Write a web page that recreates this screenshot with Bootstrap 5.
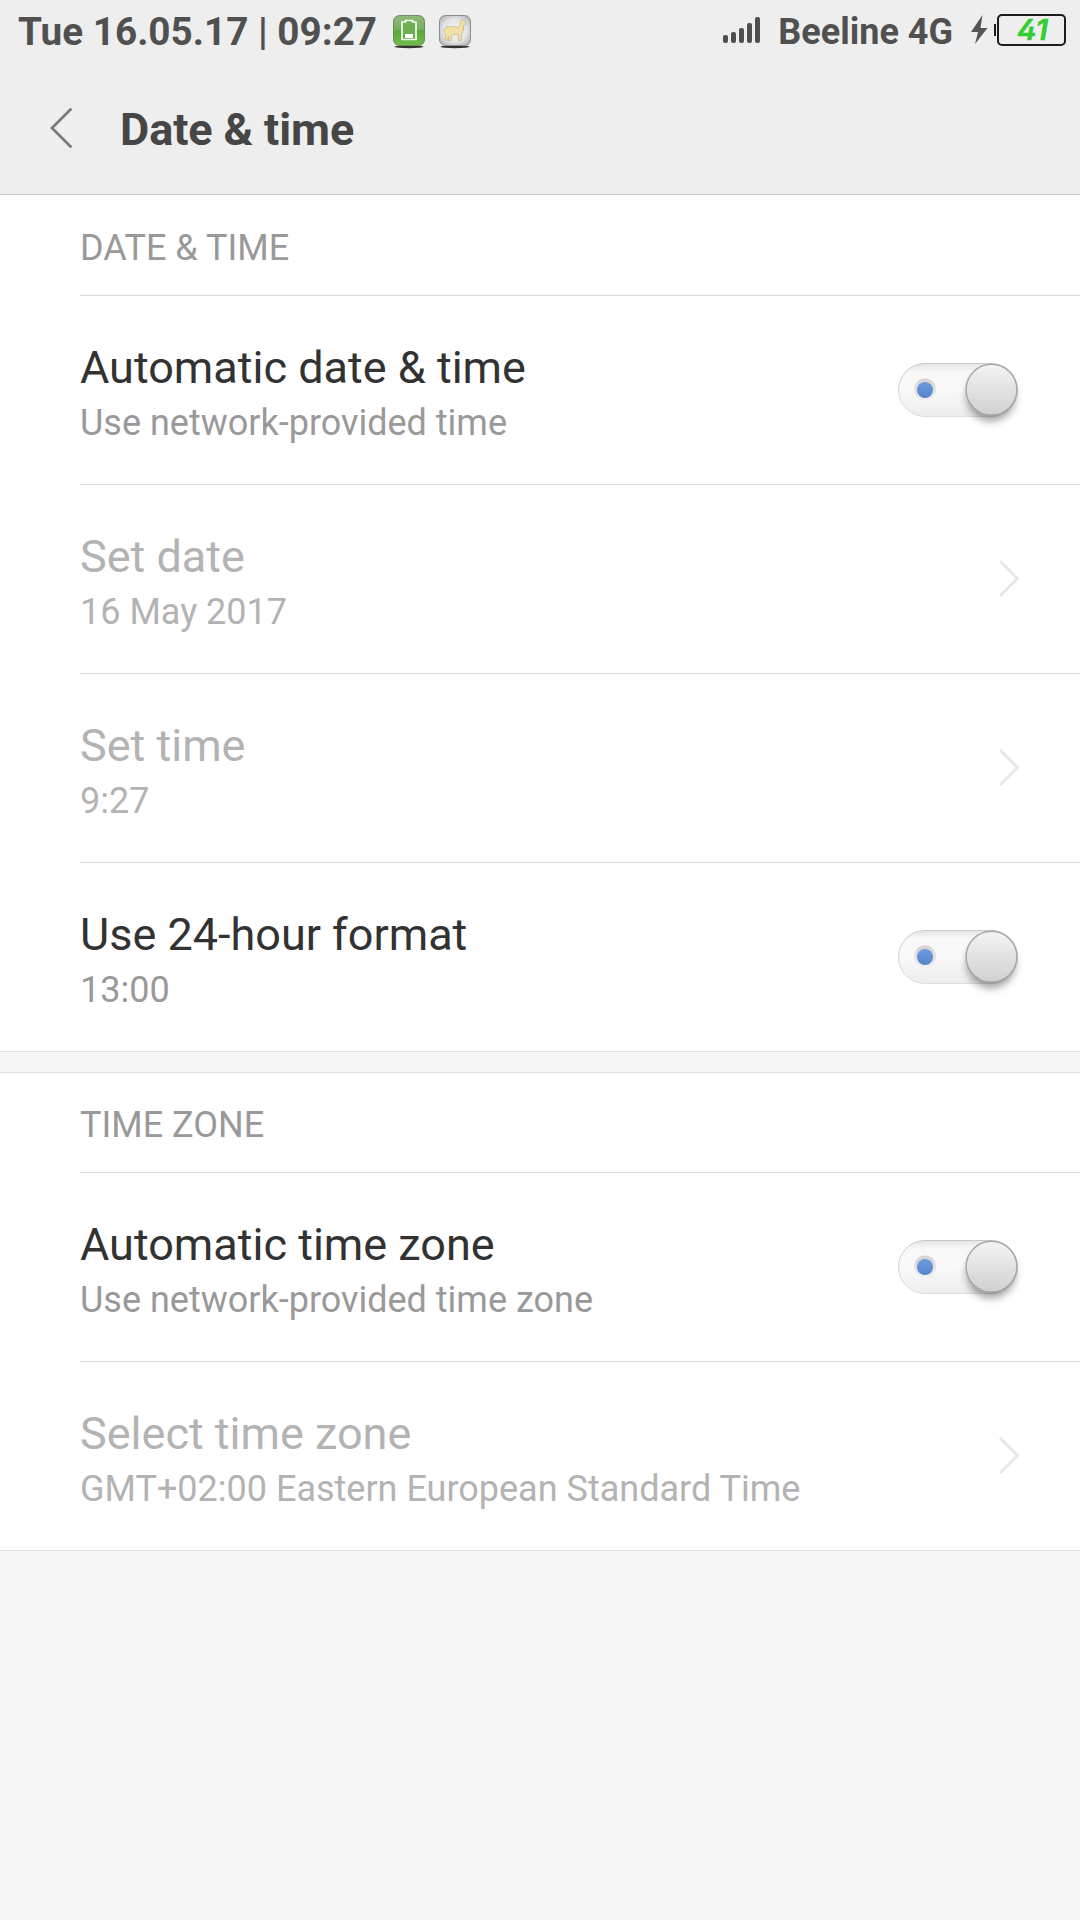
<!DOCTYPE html>
<html lang="en">
<head>
<meta charset="utf-8">
<meta name="viewport" content="width=device-width, initial-scale=1">
<title>Date &amp; time</title>
<link href="https://cdn.jsdelivr.net/npm/bootstrap@5.3.0/dist/css/bootstrap.min.css" rel="stylesheet">
<style>
body{font-family:Roboto,sans-serif;background:#f7f7f7;min-height:1920px;overflow-x:hidden}
.top-area{background:#eee;height:195px;border-bottom:1px solid #c8c8c8}
.status-bar{height:64px;padding:0 14px 0 18px;color:#505050;font-size:36px;font-weight:700;line-height:64px}
.status-clock{font-size:38.7px}
.status-app{margin-left:12px}
.status-clock + .status-app{margin-left:15px}
.status-signal{margin-bottom:2px}
.status-battery{margin-bottom:4px}
.status-carrier{margin:0 17px 0 17px}
.title-bar{height:130px;padding-left:50px}
.title-bar h1{font-size:45px;font-weight:700;line-height:54px;color:#464646;margin:2px 0 0 48px;letter-spacing:-.1px}
.title-bar svg{margin-bottom:2px}
.pref-group{background:#fff;border-bottom:1px solid #e0e0e0;padding-left:80px}
.pref-group + .pref-group{margin-top:20px;border-top:1px solid #e0e0e0}
.pref-head{height:100px;font-size:36px;font-weight:400;line-height:106px;color:#999;margin:0}
.pref-group + .pref-group .pref-head{height:99px;line-height:104px}
.pref-row{height:189px;border-top:1px solid #d8d8d8;padding:45px 59px 0 0}
.pref-name{font-size:45px;line-height:54px;color:#323232}
.pref-note{font-size:36px;line-height:56px;color:#999}
.pref-off .pref-name,.pref-off .pref-note{color:#b3b3b3}
.pref-row svg{flex:none}
.pref-toggle{margin:9px -3px 0 0}
.pref-arrow{margin-top:28px}
</style>
</head>
<body>
<svg width="0" height="0" class="position-absolute" aria-hidden="true">
  <defs>
    <linearGradient id="track" x1="0" y1="0" x2="0" y2="1"><stop offset="0" stop-color="#e4e4e4"/><stop offset=".16" stop-color="#f8f8f8"/><stop offset=".5" stop-color="#f9f9f9"/><stop offset="1" stop-color="#ededed"/></linearGradient>
    <linearGradient id="trackEdge" x1="0" y1="0" x2="0" y2="1"><stop offset="0" stop-color="#c8c8c8"/><stop offset="1" stop-color="#dedede"/></linearGradient>
    <linearGradient id="knob" x1="0" y1="0" x2="0" y2="1"><stop offset="0" stop-color="#f4f4f4"/><stop offset="1" stop-color="#d0d0d0"/></linearGradient>
    <linearGradient id="dot" x1="0" y1="0" x2="0" y2="1"><stop offset="0" stop-color="#6e9bdc"/><stop offset="1" stop-color="#5584cb"/></linearGradient>
    <linearGradient id="ring" x1="0" y1="0" x2="0" y2="1"><stop offset="0" stop-color="#d2d2d2"/><stop offset="1" stop-color="#f0f0f0"/></linearGradient>
    <linearGradient id="green" x1="0" y1="0" x2="0" y2="1"><stop offset="0" stop-color="#91b97c"/><stop offset=".48" stop-color="#77ad5c"/><stop offset=".5" stop-color="#5ea53c"/><stop offset="1" stop-color="#6fbd4b"/></linearGradient>
    <radialGradient id="silver" r=".7"><stop offset="0" stop-color="#f8f8f8"/><stop offset=".55" stop-color="#e4e4e4"/><stop offset="1" stop-color="#a4a4a4"/></radialGradient>
    <filter id="soft" x="-50%" y="-50%" width="200%" height="200%"><feGaussianBlur stdDeviation="4"/></filter>
    <symbol id="toggle" viewBox="0 0 134 84">
      <rect x="8.500" y="13.500" width="119" height="53" rx="26.500" fill="url(#track)" stroke="url(#trackEdge)"/>
      <circle cx="35" cy="39.500" r="11" fill="url(#ring)"/>
      <circle cx="35" cy="40" r="8" fill="url(#dot)"/>
      <circle cx="101" cy="47" r="24" fill="#000" opacity=".38" filter="url(#soft)"/>
      <circle cx="101.500" cy="39.700" r="25.400" fill="url(#knob)" stroke="#a8a8a8" stroke-width="1.500"/>
    </symbol>
    <symbol id="chevron" viewBox="0 0 24 40"><path d="M3 3 20.500 20.500 3 38" fill="none" stroke="#e6e6e6" stroke-width="2.800"/></symbol>
  </defs>
</svg>

<header class="top-area">
  <div class="status-bar d-flex align-items-center">
    <span class="status-clock">Tue 16.05.17 | 09:27</span>
    <svg class="status-app" width="34" height="34" viewBox="0 0 34 34">
      <ellipse cx="17" cy="31.800" rx="14.500" ry="1.500" fill="#333"/>
      <rect x="1.500" y=".500" width="31" height="30" rx="6" fill="url(#green)" stroke="#6c8a5f"/>
      <path d="M13.500 7V5.500h7V7h3.500v17.500h-14V7z" fill="#6fae55" stroke="#f4fbef" stroke-width="1.700"/>
      <path d="M13 19h8v4h-8z" fill="#fff"/>
    </svg>
    <svg class="status-app" width="34" height="34" viewBox="0 0 34 34">
      <ellipse cx="17" cy="31.800" rx="14.500" ry="1.500" fill="#333"/>
      <rect x="1.500" y=".500" width="31" height="30" rx="6" fill="url(#silver)" stroke="#8c8c8c"/>
      <path d="M22.500 6.500 23.500 4.500 25.500 5.500 28 8 27 10 25.500 10.500 25.700 15 23.500 19 23 25.500H20.500L20.200 19.500H15L13.500 22 13 25.500H10.500L10.700 21 9.500 25H7.500L7.700 20 6 17.500 6.700 13.500 9 11.500 13 12 17 11.500 20.500 12.500 22 10.500Z" fill="#f3e0a6" stroke="#c9b98f" stroke-width=".8" stroke-linejoin="round"/>
    </svg>
    <svg class="status-signal ms-auto" width="38" height="28" viewBox="0 0 38 28" fill="#505050">
      <rect x="0" y="18" width="5" height="8" rx="2"/><rect x="8" y="15" width="5" height="11" rx="2"/><rect x="16" y="11" width="5" height="15" rx="2"/><rect x="24" y="6" width="5" height="20" rx="2"/><rect x="32" y="0" width="5" height="26" rx="2"/>
    </svg>
    <span class="status-carrier">Beeline 4G</span>
    <svg class="status-battery" width="96" height="34" viewBox="0 0 96 34">
      <path d="M12.500 2 1 19H8L5 31 17.500 15H10.500Z" fill="#555"/>
      <path d="M25 11V23" stroke="#1c1c1c" stroke-width="2"/>
      <rect x="28" y="2" width="67" height="30" rx="4" fill="none" stroke="#1c1c1c" stroke-width="2"/>
      <text x="47" y="27" font-family="Inter,sans-serif" font-size="28" font-weight="600" font-style="italic" textLength="31" lengthAdjust="spacingAndGlyphs" fill="#32cd32" stroke="#32cd32" stroke-width=".6" stroke-linejoin="round" style="font-feature-settings:'cv02'">41</text>
    </svg>
  </div>
  <div class="title-bar d-flex align-items-center">
    <svg width="22" height="42" viewBox="0 0 22 42"><path d="M20.500 2.500 2 21 20.500 39.500" fill="none" stroke="#7a7a7a" stroke-width="2.800" stroke-linecap="round"/></svg>
    <h1>Date &amp; time</h1>
  </div>
</header>

<main>
  <section class="pref-group">
    <h2 class="pref-head">DATE &amp; TIME</h2>
    <div class="pref-row d-flex justify-content-between">
      <div><div class="pref-name">Automatic date &amp; time</div><div class="pref-note">Use network-provided time</div></div>
      <svg class="pref-toggle" width="134" height="84" viewBox="0 0 134 84"><use href="#toggle"/></svg>
    </div>
    <div class="pref-row pref-off d-flex justify-content-between">
      <div><div class="pref-name">Set date</div><div class="pref-note">16 May 2017</div></div>
      <svg class="pref-arrow" width="24" height="40"><use href="#chevron"/></svg>
    </div>
    <div class="pref-row pref-off d-flex justify-content-between">
      <div><div class="pref-name">Set time</div><div class="pref-note">9:27</div></div>
      <svg class="pref-arrow" width="24" height="40"><use href="#chevron"/></svg>
    </div>
    <div class="pref-row d-flex justify-content-between">
      <div><div class="pref-name">Use 24-hour format</div><div class="pref-note">13:00</div></div>
      <svg class="pref-toggle" width="134" height="84" viewBox="0 0 134 84"><use href="#toggle"/></svg>
    </div>
  </section>
  <section class="pref-group">
    <h2 class="pref-head">TIME ZONE</h2>
    <div class="pref-row d-flex justify-content-between">
      <div><div class="pref-name">Automatic time zone</div><div class="pref-note">Use network-provided time zone</div></div>
      <svg class="pref-toggle" width="134" height="84" viewBox="0 0 134 84"><use href="#toggle"/></svg>
    </div>
    <div class="pref-row pref-off d-flex justify-content-between">
      <div><div class="pref-name">Select time zone</div><div class="pref-note">GMT+02:00 Eastern European Standard Time</div></div>
      <svg class="pref-arrow" width="24" height="40"><use href="#chevron"/></svg>
    </div>
  </section>
</main>
<script src="https://cdn.jsdelivr.net/npm/bootstrap@5.3.0/dist/js/bootstrap.bundle.min.js"></script>
</body>
</html>
